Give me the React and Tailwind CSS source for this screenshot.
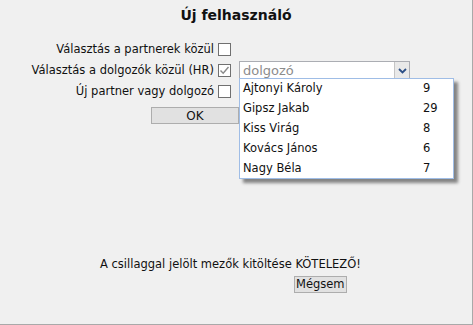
import React from 'react';

const people = [
    { name: 'Ajtonyi Károly', count: 9 },
    { name: 'Gipsz Jakab', count: 29 },
    { name: 'Kiss Virág', count: 8 },
    { name: 'Kovács János', count: 6 },
    { name: 'Nagy Béla', count: 7 },
];

const Box = ({ checked }) => (
    <span className="w-[13px] h-[13px] border border-[#707070] bg-white flex items-center justify-center">
        {checked && (
            <svg width="11" height="11" viewBox="0 0 11 11">
                <path d="M1.5 5.5 L4.2 8.3 L9.5 2" fill="none" stroke="#8a8a8a" strokeWidth="1.4" />
            </svg>
        )}
    </span>
);

const App = () => {
    return (
        <div className="w-[473px] h-[325px] bg-[#f0f0f0] border-r border-b border-[#a9a9a9] text-[11.5px] text-[#111] relative" style={{ fontFamily: '"DejaVu Sans", Verdana, sans-serif' }}>
            <h1 className="text-center font-bold text-[14px] pt-[5px] leading-[20px]">Új felhasználó</h1>

            <div className="flex flex-col mt-[14px]">
                <div className="flex items-center h-[21px]">
                    <span className="w-[216px] text-right pr-[2px]">Választás a partnerek közül</span>
                    <span className="ml-[2px]"><Box /></span>
                </div>
                <div className="flex items-center h-[21px]">
                    <span className="w-[216px] text-right pr-[2px]">Választás a dolgozók közül (HR)</span>
                    <span className="ml-[2px]"><Box checked /></span>
                    <div className="ml-[8px] w-[171px] h-[20px] border border-[#abadb3] bg-white flex items-center">
                        <span className="flex-1 pl-[3px] text-[13px] text-[#8c8c8c]">dolgozó</span>
                        <span className="w-[15px] h-[18px] border-l border-[#c5c5c5] bg-[#e9e9e9] flex items-center justify-center">
                            <svg width="9" height="6" viewBox="0 0 9 6">
                                <path d="M1 1 L4.5 4.5 L8 1" fill="none" stroke="#2c4f86" strokeWidth="1.8" />
                            </svg>
                        </span>
                    </div>
                </div>
                <div className="flex items-center h-[21px]">
                    <span className="w-[216px] text-right pr-[2px]">Új partner vagy dolgozó</span>
                    <span className="ml-[2px]"><Box /></span>
                </div>
            </div>

            <button className="ml-[151px] mt-[5px] w-[88px] h-[17px] bg-[#e1e1e1] border border-[#adadad] text-[12px] leading-[14px] text-[#111]">OK</button>

            <p className="pl-[100px] mt-[131px] leading-[16px]">A csillaggal jelölt mezők kitöltése KÖTELEZŐ!</p>
            <button className="ml-[294px] mt-[4px] px-[1px] h-[17px] bg-[#e1e1e1] border border-[#adadad] leading-[14px]">Mégsem</button>

            <ul className="absolute left-[239px] top-[78px] w-[215px] h-[101px] bg-white border border-[#9fbde6] shadow-[4px_4px_3px_rgba(0,0,0,0.45)]">
                {people.map(p => (
                    <li key={p.name} className="flex items-center h-[20px] pl-[3px]">
                        <span className="w-[180px]">{p.name}</span>
                        <span>{p.count}</span>
                    </li>
                ))}
            </ul>
        </div>
    );
};

export default App;
